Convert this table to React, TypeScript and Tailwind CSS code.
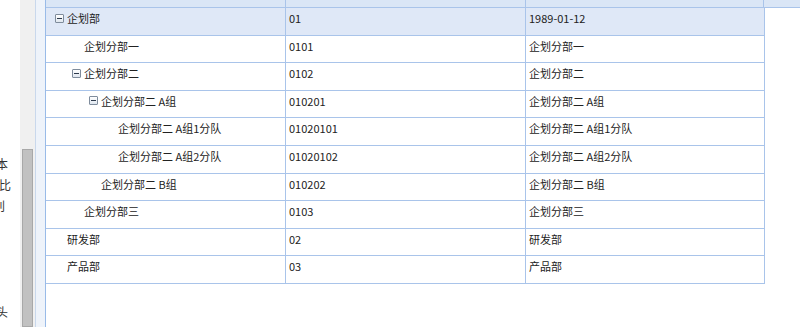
import React from 'react';

type Row = { name: string; code: string; info: string; level: number; open?: boolean; selected?: boolean };

const rows: Row[] = [
  { name: '企划部', code: '01', info: '1989-01-12', level: 0, open: true, selected: true },
  { name: '企划分部一', code: '0101', info: '企划分部一', level: 1 },
  { name: '企划分部二', code: '0102', info: '企划分部二', level: 1, open: true },
  { name: '企划分部二 A组', code: '010201', info: '企划分部二 A组', level: 2, open: true },
  { name: '企划分部二 A组1分队', code: '01020101', info: '企划分部二 A组1分队', level: 3 },
  { name: '企划分部二 A组2分队', code: '01020102', info: '企划分部二 A组2分队', level: 3 },
  { name: '企划分部二 B组', code: '010202', info: '企划分部二 B组', level: 2 },
  { name: '企划分部三', code: '0103', info: '企划分部三', level: 1 },
  { name: '研发部', code: '02', info: '研发部', level: 0 },
  { name: '产品部', code: '03', info: '产品部', level: 0 },
];

const indent = ['pl-[21px]', 'pl-[38px]', 'pl-[55px]', 'pl-[72px]'];

const Toggle: React.FC = () => (
  <span className="mr-[3px] flex h-[9px] w-[9px] items-center justify-center rounded-[1px] border border-[#7f8c9c] bg-gradient-to-b from-white to-[#dfe6ef]">
    <span className="h-px w-[5px] bg-[#2d3a4c]" />
  </span>
);

const App: React.FC = () => {
  return (
    <div
      className="flex h-[327px] w-[800px] overflow-hidden bg-white text-[11px] text-[#222]"
      style={{ fontFamily: '"Noto Sans CJK SC", "Noto Sans", sans-serif' }}
    >
      {/* clipped page text on the left */}
      <div className="w-[20px] overflow-hidden pt-[153px] text-[12px] leading-[21px] text-[#333]">
        <div className="ml-[-4px] whitespace-nowrap">本</div>
        <div className="ml-[-1px] whitespace-nowrap">比</div>
        <div className="ml-[-7px] whitespace-nowrap">别</div>
        <div className="ml-[-4px] mt-[85px] whitespace-nowrap">头</div>
      </div>

      {/* scrollbar */}
      <div className="flex w-[15px] flex-col bg-[#f0f0f0] px-[2px] pt-[149px]">
        <div className="flex-1 border border-[#a8a8a8] bg-[#c1c1c1]" />
      </div>

      <div className="w-[10px] border-l border-[#c9d8ec] bg-[#eef3fa]" />

      {/* grid */}
      <div className="flex flex-1 flex-col border-l border-[#99bbe8]">
        <div className="flex h-[8px] border-b border-[#a9c4ea] bg-[#dae6f6]">
          <div className="w-[240px] border-r border-[#a9c4ea]" />
          <div className="w-[240px] border-r border-[#a9c4ea]" />
          <div className="w-[238px] border-r border-[#a9c4ea]" />
        </div>
        <div className="w-[719px]">
          {rows.map((r, i) => (
            <div
              key={i}
              className={`flex h-[27.6px] border-b border-[#a9c4ea] leading-[20px] ${r.selected ? 'bg-[#dfe8f7]' : 'bg-white'}`}
            >
              <div className={`flex w-[240px] items-start border-r border-[#a9c4ea] ${r.open ? '' : indent[r.level]}`}>
                {r.open ? (
                  <div className={`flex items-center ${['pl-[9px]', 'pl-[26px]', 'pl-[43px]'][r.level]}`}>
                    <Toggle />
                    <span className="whitespace-nowrap">{r.name}</span>
                  </div>
                ) : (
                  <span className="whitespace-nowrap">{r.name}</span>
                )}
              </div>
              <div className="w-[240px] border-r border-[#a9c4ea] pl-[3px]">{r.code}</div>
              <div className="w-[239px] border-r border-[#a9c4ea] pl-[3px] whitespace-nowrap">{r.info}</div>
            </div>
          ))}
        </div>
      </div>
    </div>
  );
};

export default App;
